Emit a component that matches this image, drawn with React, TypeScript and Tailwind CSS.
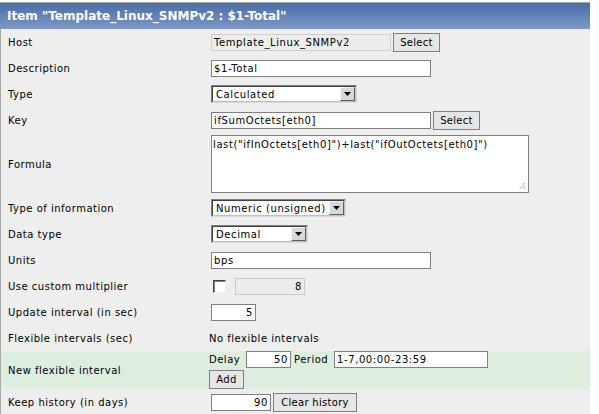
import React from "react";

const F = { fontFamily: "'DejaVu Sans', Verdana, sans-serif" };

function Btn({ children, w }: { children: React.ReactNode; w: string }) {
  return (
    <div
      className={`flex h-[19px] items-center justify-center border border-[#7f7f7f] bg-[#e6e6e6] text-[10px] tracking-[0.3px] text-black ${w}`}
    >
      {children}
    </div>
  );
}

function Input({ value, w, right, disabled }: { value: string; w: string; right?: boolean; disabled?: boolean }) {
  return (
    <div
      className={`flex h-[17px] items-center overflow-hidden whitespace-nowrap border px-[2px] text-[10px] tracking-[0.6px] text-black ${w} ${right ? "justify-end" : ""} ${
        disabled ? "border-[#c8c8c8] bg-[#ececec]" : "border-[#808080] bg-white"
      }`}
    >
      {value}
    </div>
  );
}

function Select({ value, w }: { value: string; w: string }) {
  return (
    <div
      className={`flex h-[18px] items-stretch border border-t-[#808080] border-l-[#808080] border-b-[#d8d8d8] border-r-[#d8d8d8] bg-white ${w}`}
    >
      <div className="flex flex-1 items-center border border-t-[#404040] border-l-[#404040] border-b-[#c0c0c0] border-r-[#c0c0c0] pl-[3px] text-[10px] tracking-[0.6px] text-black">
        <span className="flex-1 whitespace-nowrap">{value}</span>
        <div className="flex w-[15px] items-center justify-center self-stretch border border-t-[#f4f4f4] border-l-[#f4f4f4] border-b-[#606060] border-r-[#606060] bg-[#d8d8d8]">
          <svg width="7" height="4" viewBox="0 0 7 4">
            <path d="M0 0H7L3.5 4Z" fill="#000" />
          </svg>
        </div>
      </div>
    </div>
  );
}

function Row({ label, children, h = "h-[26px]", green }: { label: string; children?: React.ReactNode; h?: string; green?: boolean }) {
  return (
    <div className={`flex items-center ${h} ${green ? "bg-[#ddeedf]" : ""}`}>
      <div className="w-[208px] whitespace-nowrap pl-[7px] text-[10px] tracking-[0.5px] text-black">{label}</div>
      <div className="flex-1">{children}</div>
    </div>
  );
}

export default function App() {
  return (
    <div className="h-[414px] w-[599px] bg-white" style={F}>
      <div className="mt-[2px] w-[590px] border-t border-[#a8a8a8]">
        <div className="flex h-[26px] items-center bg-gradient-to-b from-[#4a6ca8] to-[#7d98c3] pl-[7px] text-[12px] font-bold text-white">
          Item "Template_Linux_SNMPv2 : $1-Total"
        </div>
        <div className="border-l border-[#a8a8a8] bg-[#eeeeee] pb-[3px]">
          <Row label="Host">
            <div className="ml-[2px] flex items-center gap-[2px]">
              <div className="flex h-[17px] w-[180px] items-center whitespace-nowrap border border-[#d0d0d0] bg-[#ececec] px-[2px] text-[10px] tracking-[0.6px] text-black">
                Template_Linux_SNMPv2
              </div>
              <Btn w="w-[47px]">Select</Btn>
            </div>
          </Row>
          <Row label="Description">
            <div className="ml-[2px]">
              <Input value="$1-Total" w="w-[220px]" />
            </div>
          </Row>
          <Row label="Type">
            <div className="ml-[2px]">
              <Select value="Calculated" w="w-[146px]" />
            </div>
          </Row>
          <Row label="Key">
            <div className="ml-[2px] flex items-center gap-[2px]">
              <Input value="ifSumOctets[eth0]" w="w-[220px]" />
              <Btn w="w-[47px]">Select</Btn>
            </div>
          </Row>
          <Row label="Formula" h="h-[62px]">
            <div className="relative ml-[2px] h-[58px] w-[318px] whitespace-nowrap border border-[#808080] bg-white px-[1px] pt-[1px] text-[10px] tracking-[0.6px] text-black">
              last("ifInOctets[eth0]")+last("ifOutOctets[eth0]")
              <svg className="absolute bottom-[2px] right-[2px]" width="8" height="8" viewBox="0 0 8 8">
                <path d="M7 1L1 7M7 4L4 7M7 6.5L6.5 7" stroke="#888" strokeWidth="1" strokeDasharray="1 1" />
              </svg>
            </div>
          </Row>
          <Row label="Type of information">
            <div className="ml-[2px]">
              <Select value="Numeric (unsigned)" w="w-[135px]" />
            </div>
          </Row>
          <Row label="Data type">
            <div className="ml-[2px]">
              <Select value="Decimal" w="w-[97px]" />
            </div>
          </Row>
          <Row label="Units">
            <div className="ml-[2px]">
              <Input value="bps" w="w-[220px]" />
            </div>
          </Row>
          <Row label="Use custom multiplier">
            <div className="ml-[4px] flex items-center gap-[9px]">
              <div className="h-[13px] w-[13px] border border-t-[#404040] border-l-[#404040] border-b-[#f0f0f0] border-r-[#f0f0f0] bg-white shadow-[inset_1px_1px_0_#808080]" />
              <Input value="8" w="w-[70px]" right disabled />
            </div>
          </Row>
          <Row label="Update interval (in sec)">
            <div className="ml-[2px]">
              <Input value="5" w="w-[45px]" right />
            </div>
          </Row>
          <Row label="Flexible intervals (sec)">
            <div className="text-[10px] tracking-[0.5px] text-black">No flexible intervals</div>
          </Row>
          <Row label="New flexible interval" h="h-[38px]" green>
            <div className="flex flex-col gap-[2px]">
              <div className="flex items-center text-[10px] tracking-[0.5px] text-black">
                <span className="w-[37px]">Delay</span>
                <Input value="50" w="w-[45px]" right />
                <span className="ml-[3px] w-[40px]">Period</span>
                <Input value="1-7,00:00-23:59" w="w-[154px]" />
              </div>
              <Btn w="w-[35px]">Add</Btn>
            </div>
          </Row>
          <Row label="Keep history (in days)">
            <div className="ml-[2px] flex items-center gap-[2px]">
              <Input value="90" w="w-[60px]" right />
              <Btn w="w-[84px]">Clear history</Btn>
            </div>
          </Row>
        </div>
      </div>
    </div>
  );
}
